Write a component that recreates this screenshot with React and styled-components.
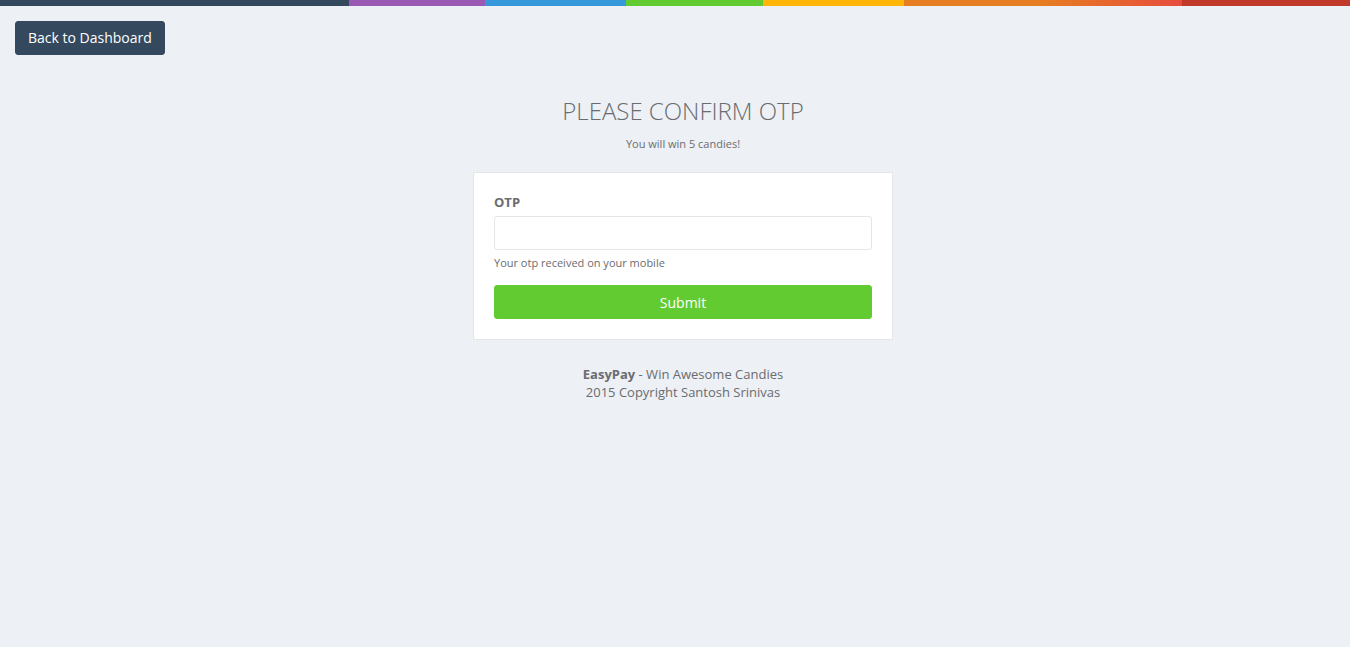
import React from 'react'
import styled, { createGlobalStyle } from 'styled-components'

const GlobalStyle = createGlobalStyle`
  html, body {
    margin: 0;
    padding: 0;
    background: #edf0f5;
    font-family: "Open Sans", "Liberation Sans", sans-serif;
    color: #6a6c6f;
    font-size: 13px;
  }
  * { box-sizing: border-box; }
`

const ColorLine = styled.div`
  height: 6px;
  background: linear-gradient(
    to right,
    #34495e 0, #34495e 349px,
    #9b59b6 349px, #9b59b6 485px,
    #3498db 485px, #3498db 626px,
    #62cb31 626px, #62cb31 763px,
    #ffb606 763px, #ffb606 904px,
    #e67e22 904px, #e67e22 1040px,
    #e74c3c 1182px,
    #c0392b 1182px, #c0392b 100%
  );
`

const TopBar = styled.div`
  padding: 15px 15px 0;
`

const DarkButton = styled.button`
  background: #34495e;
  border: 1px solid #34495e;
  border-radius: 3px;
  color: #fff;
  font-family: inherit;
  font-size: 14px;
  padding: 0 12px 1px;
  height: 34px;
  cursor: pointer;
`

const Main = styled.div`
  padding-left: 16px;
`

const Container = styled.div`
  width: 420px;
  margin: 0 auto;
  padding-top: 42px;
`

const Title = styled.h3`
  margin: 0;
  text-align: center;
  font-weight: 300;
  font-size: 24px;
  line-height: 28px;
  color: #6a6c6f;
`

const Subtitle = styled.small`
  display: block;
  text-align: center;
  font-size: 11px;
  margin-top: 11px;
  color: #6a6c6f;
`

const Panel = styled.div`
  margin-top: 21px;
  background: #fff;
  border: 1px solid #e4e5e7;
  padding: 20px;
`

const Label = styled.label`
  display: block;
  font-weight: 700;
  font-size: 13px;
  margin: 0 0 5px;
`

const Input = styled.input`
  display: block;
  width: 100%;
  height: 34px;
  border: 1px solid #e4e5e7;
  border-radius: 3px;
  padding: 6px 12px;
  font-family: inherit;
  font-size: 13px;
  outline: none;
`

const Help = styled.span`
  display: block;
  font-size: 11px;
  margin-top: 5px;
  color: #6a6c6f;
`

const SubmitButton = styled.button`
  display: block;
  width: 100%;
  height: 34px;
  margin-top: 15px;
  background: #62cb31;
  border: 1px solid #62cb31;
  border-radius: 3px;
  color: #fff;
  font-family: inherit;
  font-size: 14px;
  cursor: pointer;
`

const Footer = styled.div`
  text-align: center;
  margin-top: 25px;
  font-size: 13px;
  line-height: 18px;
  color: #6a6c6f;
  strong { font-weight: 700; }
`

export default function App() {
  return (
    <>
      <GlobalStyle />
      <ColorLine />
      <TopBar>
        <DarkButton>Back to Dashboard</DarkButton>
      </TopBar>
      <Main>
        <Container>
          <Title>PLEASE CONFIRM OTP</Title>
          <Subtitle>You will win 5 candies!</Subtitle>
          <Panel>
            <Label htmlFor="otp">OTP</Label>
            <Input id="otp" type="text" />
            <Help>Your otp received on your mobile</Help>
            <SubmitButton>Submit</SubmitButton>
          </Panel>
          <Footer>
            <strong>EasyPay</strong> - Win Awesome Candies <br />
            2015 Copyright Santosh Srinivas
          </Footer>
        </Container>
      </Main>
    </>
  )
}
